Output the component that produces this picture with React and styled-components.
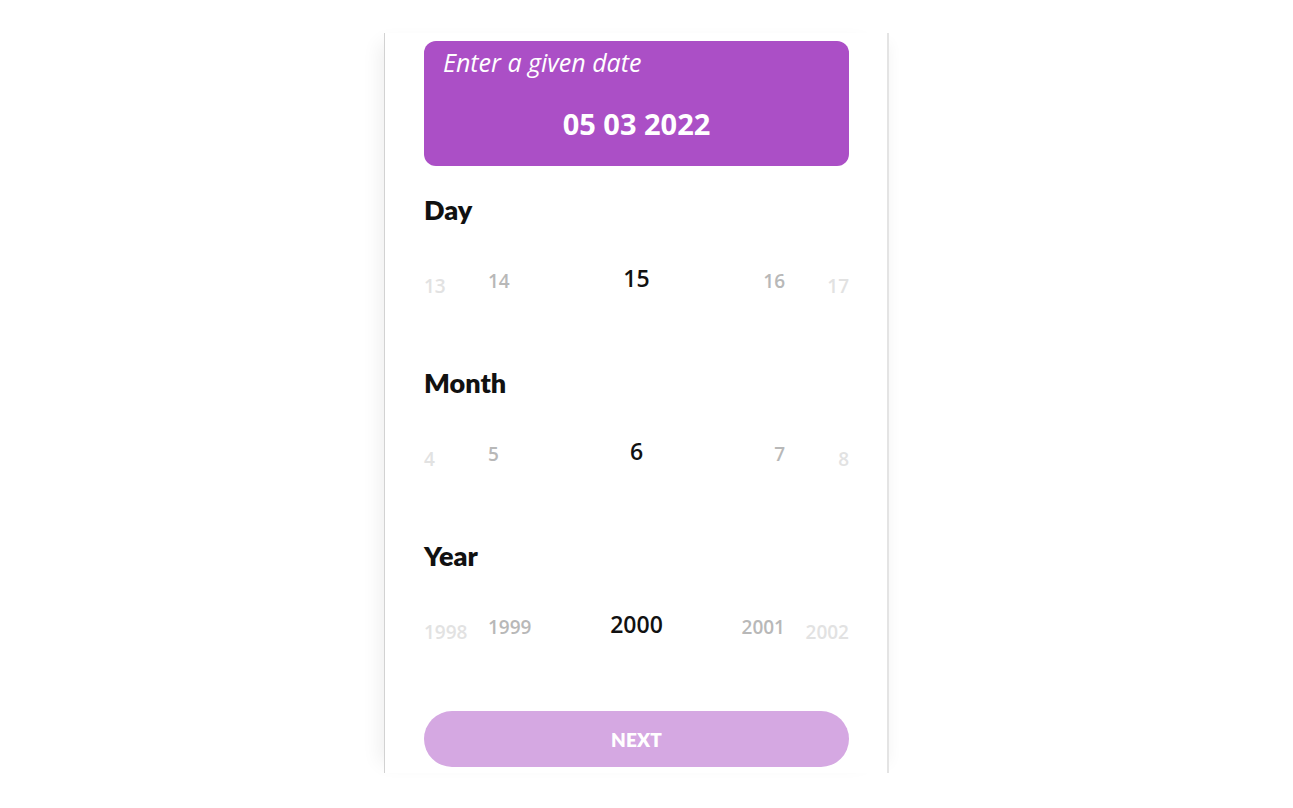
import React from "react";
import styled, { createGlobalStyle } from "styled-components";

const Global = createGlobalStyle`
  html, body { margin: 0; padding: 0; background: #ffffff; }
  body { font-family: "Open Sans", "Liberation Sans", sans-serif; }
`;

const Page = styled.div`
  width: 1293px;
  height: 808px;
  display: flex;
  align-items: flex-start;
  padding: 33px 0 0 384px;
  box-sizing: border-box;
  overflow: hidden;
`;

const Panel = styled.div`
  width: 505px;
  height: 740px;
  box-sizing: border-box;
  padding: 8px 38px 6px 39px;
  background: #fff;
  border-left: 1px solid #d2d2d2;
  border-right: 2px solid #e4e4e4;
  box-shadow: -14px 0 18px -10px rgba(0, 0, 0, 0.07),
    10px 0 14px -10px rgba(0, 0, 0, 0.05);
  display: flex;
  flex-direction: column;
`;

const DateCard = styled.div`
  height: 125px;
  border-radius: 12px;
  background: #ab4fc6;
  color: #fff;
  display: flex;
  flex-direction: column;
  padding: 4px 19px 0;
  box-sizing: border-box;
`;

const Prompt = styled.div`
  font-family: "Open Sans", sans-serif;
  font-style: italic;
  font-size: 25px;
  line-height: 34px;
`;

const DateValue = styled.div`
  margin-top: 26px;
  text-align: center;
  font-family: "Open Sans", sans-serif;
  font-weight: 700;
  font-size: 29px;
  line-height: 38px;
`;

const Section = styled.section`
  margin-top: ${(p) => p.$top}px;
  display: flex;
  flex-direction: column;
`;

const Heading = styled.h2`
  margin: 0;
  font-family: Lato, "Liberation Sans", sans-serif;
  font-weight: 800;
  font-size: 27px;
  line-height: 32px;
  color: #111;
`;

const Wheel = styled.div`
  margin-top: 38px;
  height: 60px;
  display: grid;
  grid-template-columns: 64px 1fr auto 1fr 64px;
  align-items: start;
`;

const shades = { 0: "#111111", 1: "#b8b8b8", 2: "#e2e2e2" };

const Item = styled.span`
  font-family: "Open Sans", sans-serif;
  font-weight: 600;
  font-size: ${(p) => (p.$depth === 0 ? 23 : 19)}px;
  line-height: 28px;
  color: ${(p) => shades[p.$depth]};
  padding-top: ${(p) => (p.$depth === 0 ? 0 : p.$depth === 1 ? 3 : 8)}px;
  text-align: ${(p) => p.$align};
`;

const NextButton = styled.button`
  margin-top: 41px;
  height: 56px;
  border: none;
  border-radius: 28px;
  background: #d5a8e2;
  color: #fff;
  font-family: Lato, "Liberation Sans", sans-serif;
  font-weight: 800;
  font-size: 19px;
  letter-spacing: 0.2px;
  cursor: pointer;
`;

const sections = [
  { title: "Day", values: ["13", "14", "15", "16", "17"], top: 28 },
  { title: "Month", values: ["4", "5", "6", "7", "8"], top: 43 },
  { title: "Year", values: ["1998", "1999", "2000", "2001", "2002"], top: 43 },
];

const depths = [2, 1, 0, 1, 2];
const aligns = ["left", "left", "center", "right", "right"];

export default function App() {
  return (
    <>
      <Global />
      <Page>
        <Panel>
          <DateCard>
            <Prompt>Enter a given date</Prompt>
            <DateValue>05 03 2022</DateValue>
          </DateCard>
          {sections.map((s) => (
            <Section key={s.title} $top={s.top}>
              <Heading>{s.title}</Heading>
              <Wheel>
                {s.values.map((v, i) => (
                  <Item key={v} $depth={depths[i]} $align={aligns[i]}>
                    {v}
                  </Item>
                ))}
              </Wheel>
            </Section>
          ))}
          <NextButton>NEXT</NextButton>
        </Panel>
      </Page>
    </>
  );
}
